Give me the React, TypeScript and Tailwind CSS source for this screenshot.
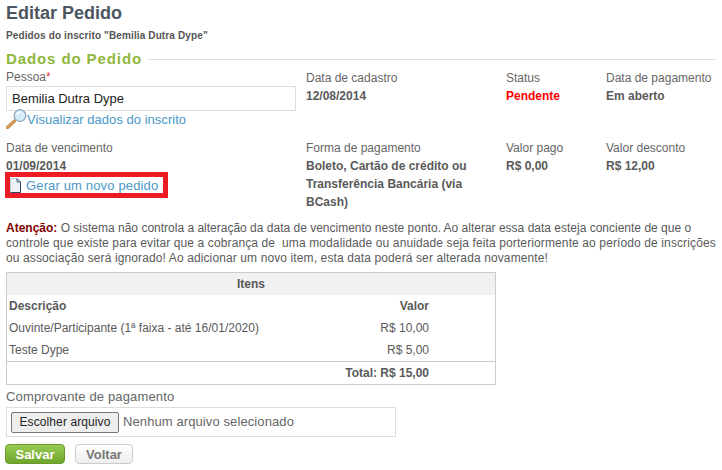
const LABEL = "text-[12px] leading-[18px] text-[#666]";
const VALUE = "text-[12px] leading-[18px] font-bold text-[#5a5a5a]";

function Field({ label, value, valueClass }: { label: string; value: string; valueClass?: string }) {
  return (
    <div>
      <div className={LABEL}>{label}</div>
      <div className={valueClass ?? VALUE}>{value}</div>
    </div>
  );
}

function MagnifierIcon() {
  return (
    <svg width="21" height="20" viewBox="0 0 21 20" className="-mt-[1px] shrink-0">
      <path d="M8.5 12 L1.5 18.5" stroke="#c98a4a" strokeWidth="3.2" strokeLinecap="round" />
      <path d="M8.5 12 L1.5 18.5" stroke="#e8b070" strokeWidth="1" strokeLinecap="round" />
      <circle cx="14" cy="6.5" r="5.8" fill="#d6ecfb" stroke="#8fa6b8" strokeWidth="1.3" />
      <path d="M11 6a3.4 3.4 0 0 1 3-3" stroke="#fff" strokeWidth="1.3" fill="none" />
    </svg>
  );
}

function PageIcon() {
  return (
    <svg width="11" height="15" viewBox="0 0 11 15" className="shrink-0">
      <path d="M.5.5h6.5l3.5 3.5v10.5H.5z" fill="#eef2f8" stroke="#c3cbda" strokeWidth="1" />
      <path d="M.5 14.5h10V4" fill="none" stroke="#2f4468" strokeWidth="1" />
      <path d="M7 .5V4h3.5z" fill="#d5dce9" stroke="#51638a" strokeWidth="1" />
    </svg>
  );
}

export default function App() {
  return (
    <div className="h-[470px] w-[722px] overflow-hidden bg-white px-[6px] font-['Liberation_Sans',Arial,sans-serif] text-[12px] text-[#666]">
      <h1 className="pt-[3px] text-[18px] font-bold leading-[20px] text-[#4b5662]">Editar Pedido</h1>
      <p className="mt-[7px] text-[10px] font-bold leading-[12px] tracking-[0.125px] text-[#555]">Pedidos do inscrito "Bemilia Dutra Dype"</p>

      <div className="mt-[8px] flex items-center gap-[6px]">
        <h2 className="text-[15px] font-bold leading-[18px] tracking-[0.9px] text-[#8fb73e]">Dados do Pedido</h2>
        <div className="h-px flex-1 bg-[#ddd]" />
      </div>

      <div className="grid grid-cols-[300px_200px_100px_1fr]">
        <div className="h-[71px]">
          <div className={LABEL}>
            Pessoa<span className="text-[#e33]">*</span>
          </div>
          <div className="flex h-[25px] w-[290px] items-center border border-[#ddd] pl-[5px] text-[13px] text-[#222]">
            Bemilia Dutra Dype
          </div>
          <div className="flex h-[17px] items-center text-[13px] tracking-[0.04px] text-[#4a98c9]">
            <MagnifierIcon />
            <span>Visualizar dados do inscrito</span>
          </div>
        </div>
        <div className="pt-px"><Field label="Data de cadastro" value="12/08/2014" /></div>
        <div className="pt-px"><Field label="Status" value="Pendente" valueClass="text-[12px] leading-[18px] font-bold text-[#f00]" /></div>
        <div className="pt-px"><Field label="Data de pagamento" value="Em aberto" /></div>

        <div>
          <Field label="Data de vencimento" value="01/09/2014" />
          <div className="-ml-px mt-[-3px] flex h-[26px] w-[163px] items-center gap-[5px] whitespace-nowrap border-[5px] border-[#ed1c24] text-[13px] leading-none tracking-[0.15px] text-[#4a98c9]">
            <PageIcon />
            <span>Gerar um novo pedido</span>
          </div>
        </div>
        <div className="w-[190px]">
          <Field label="Forma de pagamento" value="Boleto, Cartão de crédito ou Transferência Bancária (via BCash)" />
        </div>
        <Field label="Valor pago" value="R$ 0,00" />
        <Field label="Valor desconto" value="R$ 12,00" />
      </div>

      <p className="mt-[10px] whitespace-nowrap text-[12px] leading-[15px] text-[#5a5a5a]">
        <b className="text-[#800000]">Atenção:</b> O sistema não controla a alteração da data de vencimento neste ponto. Ao alterar essa data esteja conciente de que o
        <br />
        <span className="tracking-[0.115px]">controle que existe para evitar que a cobrança de&nbsp; uma modalidade ou anuidade seja feita porteriormente ao período de inscrições</span>
        <br />
        <span className="tracking-[0.115px]">ou associação será ignorado! Ao adicionar um novo item, esta data poderá ser alterada novamente!</span>
      </p>

      <div className="mt-[6px] w-[490px] border border-[#ccc] text-[12px] text-[#5a5a5a]">
        <div className="h-[22px] bg-[#f1f1f1] text-center font-bold leading-[22px]">Itens</div>
        <div className="grid grid-cols-[1fr_80px_64px] px-[2px] leading-[22px]">
          <b className="h-[22px]">Descrição</b>
          <b className="text-right">Valor</b>
          <span />
          <span className="h-[22px]">Ouvinte/Participante (1ª faixa - até 16/01/2020)</span>
          <span className="text-right">R$ 10,00</span>
          <span />
          <span className="h-[22px]">Teste Dype</span>
          <span className="text-right">R$ 5,00</span>
          <span />
        </div>
        <div className="h-[23px] border-t border-[#ccc] pr-[66px] text-right font-bold leading-[23px]">Total: R$ 15,00</div>
      </div>

      <div className="mt-[4px] text-[13px] leading-[16px] tracking-[0.15px] text-[#666]">Comprovante de pagamento</div>
      <div className="mt-[2px] flex h-[30px] w-[390px] items-center border border-[#ddd] pl-[4px] text-[13px] tracking-[0.1px] text-[#666]">
        <button className="h-[21px] w-[108px] rounded-[2px] border border-[#777] bg-[#eee] text-[12px] tracking-[0.1px] text-[#222]">Escolher arquivo</button>
        <span className="ml-[4px]">Nenhum arquivo selecionado</span>
      </div>

      <div className="-ml-px mt-[7px] flex gap-[10px]">
        <button className="h-[20px] w-[60px] rounded-[4px] border border-[#6a9a2a] bg-gradient-to-b from-[#9acb52] to-[#6fa52c] text-[13px] font-bold text-white">Salvar</button>
        <button className="h-[20px] w-[58px] rounded-[4px] border border-[#ccc] bg-gradient-to-b from-white to-[#eee] text-[13px] font-bold text-[#777]">Voltar</button>
      </div>
    </div>
  );
}
